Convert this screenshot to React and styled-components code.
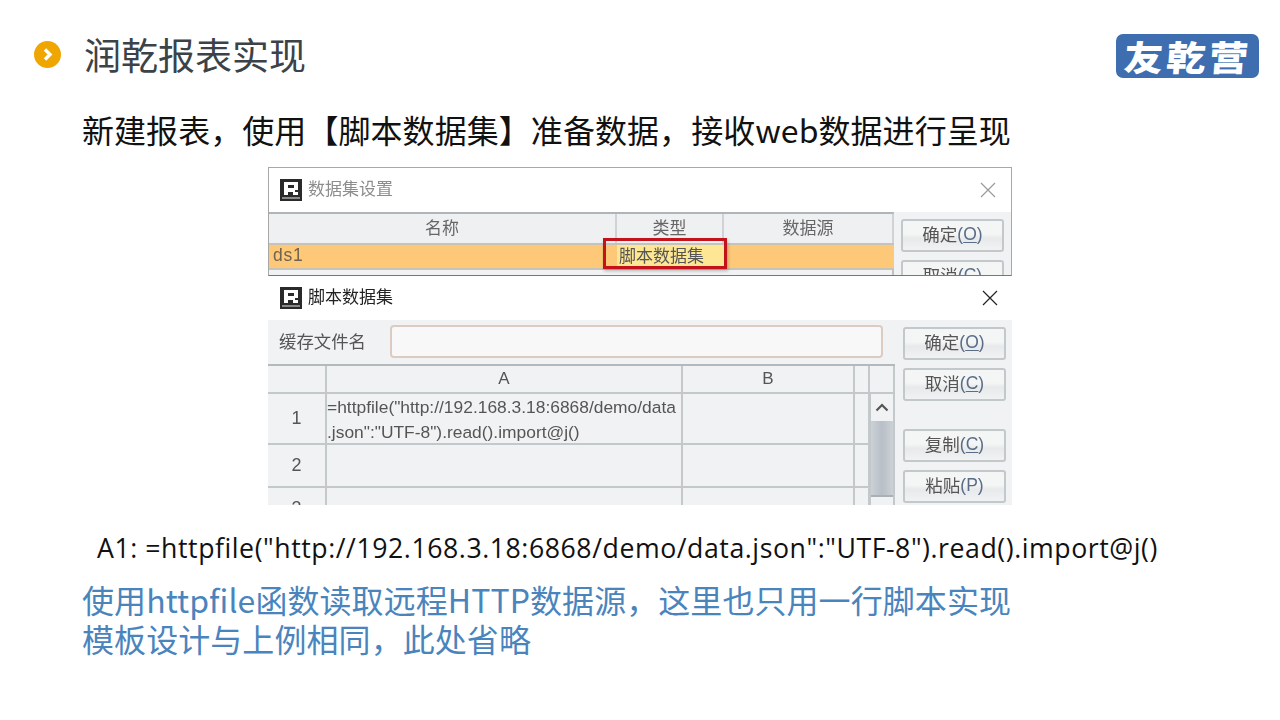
import React from "react";
import styled, { createGlobalStyle } from "styled-components";

const Global = createGlobalStyle`
  html, body { margin: 0; padding: 0; background: #fff; }
  * { box-sizing: border-box; }
`;
const CJK = `"Open Sans", "Noto Sans CJK SC", sans-serif`;
const UI = `"Liberation Sans", "Noto Sans CJK SC", sans-serif`;

const Slide = styled.div`
  width: 1280px; height: 720px; overflow: hidden; background: #fff;
  display: flex; flex-direction: column; font-family: ${CJK};
`;
const Header = styled.header`
  height: 78px; padding: 34px 21px 0 34px;
  display: flex; align-items: flex-start; justify-content: space-between;
`;
const TitleWrap = styled.div`display: flex; align-items: center; gap: 23px; height: 40px;`;
const Title = styled.h1`
  margin: 0; font-size: 37px; font-weight: 400; line-height: 40px; color: #3b4349;
  font-family: "Noto Sans CJK SC", sans-serif;
`;
const Logo = styled.div`
  width: 143px; height: 44px; border-radius: 7px; background: #3e6db0; color: #fff;
  display: flex; align-items: center; justify-content: center; padding-left: 2px;
`;
const LogoText = styled.span`
  display: block; transform: scaleX(1.12) skewX(-4deg); letter-spacing: 3px; white-space: nowrap;
  font: 900 35px/44px "Noto Sans CJK SC", sans-serif;
`;
const Subtitle = styled.p`
  margin: 29px 0 0 82px; font: 400 32px/44px "Noto Sans CJK SC", sans-serif; color: #111; height: 44px;
  letter-spacing: 0.06px;
`;
const Shots = styled.div`
  margin: 16px 0 0 268px; width: 744px; height: 338px; display: flex; flex-direction: column;
  filter: blur(0.4px); font-family: ${UI};
`;
const Dialog = styled.section`
  height: ${p => p.$h}px; overflow: hidden; position: relative;
  background: #f1f2f3; display: flex; flex-direction: column; flex: none;
  ${p => p.$framed && "border: 1px solid #a8a8a8; border-bottom: 1px solid #777;"}
`;
const TitleBar = styled.div`
  height: ${p => p.$h}px; flex: none; background: #fff; display: flex; align-items: center;
  padding: 0 ${p => p.$pr}px 0 ${p => p.$pl}px; gap: 6px;
  color: ${p => p.$dim ? "#8d8d8d" : "#222"};
`;
const DialogName = styled.span`
  flex: 1; font: 400 17px/22px "Noto Sans CJK SC", sans-serif; padding-bottom: 4px;
`;
const Body = styled.div`flex: 1; display: flex; min-height: 0;`;
const Left = styled.div`flex: none; width: ${p => p.$w}px; display: flex; flex-direction: column;`;
const Side = styled.div`
  flex: 1; display: flex; flex-direction: column; align-items: ${p => p.$align || "center"};
  padding-top: ${p => p.$top}px;
`;
const Btn = styled.div`
  width: 103px; height: 33px; flex: none; margin-bottom: ${p => p.$mb}px;
  border: 2px solid #c3c8cb; border-radius: 3px; padding-bottom: 4px;
  background: linear-gradient(#f4f5f5 45%, #e7e9ea 60%, #f1f2f3);
  display: flex; align-items: center; justify-content: center;
  font-size: 17.5px; line-height: 24px; color: #555; font-family: "Noto Sans CJK SC", sans-serif;
`;
const Key = styled.span`color: #5a6d88; font-family: "Liberation Sans", sans-serif; font-size: 17.5px;`;
const Mn = styled.u`text-underline-offset: 2px;`;

const Sets = styled.div`
  display: grid; grid-template-columns: 348px 107px 170px; grid-template-rows: 29px 27px 20px;
  border-top: 2px solid #b0b5b8; border-right: 2px solid #bcc1c4;
`;
const SetHead = styled.div`
  display: flex; align-items: center; justify-content: center; background: #eff0f2; padding-bottom: 4px;
  border-right: 2px solid #d0d3d6; font: 400 17px/22px "Noto Sans CJK SC", sans-serif; color: #666;
`;
const SetCell = styled.div`
  background: #fdc877; border-top: 2px solid #c8c3b8; border-bottom: 2px solid #c8c3b8;
  padding-left: 4px; font-size: 17.5px; line-height: 21px; color: #6e6350; letter-spacing: .8px;
`;
const SetHit = styled(SetCell)`
  background: #fde794; color: #555; font: 400 17px/20px "Noto Sans CJK SC", sans-serif; letter-spacing: 0; padding-left: 2px;
`;
const Mark = styled.div`
  position: absolute; left: 334px; top: 70px; width: 124px; height: 31px;
  border: 3px solid #c3131a; box-shadow: 1px 2px 3px rgba(0,0,0,.25);
`;
const CacheRow = styled.div`
  height: 44px; flex: none; display: flex; align-items: flex-start; padding: 5px 0 0 11px;
`;
const CacheLabel = styled.span`
  width: 111px; font: 400 17.4px/31px "Noto Sans CJK SC", sans-serif; color: #555;
`;
const CacheInput = styled.div`
  width: 493px; height: 33px; background: #f8f8f8; border: 2px solid #dccbc0; border-radius: 4px;
`;
const Sheet = styled.div`
  width: 627px; display: grid; grid-template-columns: 59px 356px 172px 15px 25px;
  grid-template-rows: 28px 51px 43px 43px; position: relative;
  border-top: 2px solid #b4b9bc;
`;
const C = styled.div`
  border-right: 2px solid #c3c8cb; border-bottom: 2px solid #c3c8cb;
  display: flex; align-items: center; justify-content: center; color: #555;
  font-size: ${p => p.$fs || 17}px; background: #f1f2f3;
`;
const Formula = styled(C)`
  display: block; padding: 1px 0 0 0; font-size: 17.4px; line-height: 25px; color: #555; white-space: nowrap;
`;
const Bar = styled.div`
  position: absolute; left: 601px; top: 28px; width: 26px; height: 130px; border-left: 2px solid #c3c8cb; border-right: 2px solid #c3c8cb;
  display: flex; flex-direction: column; background: #f1f2f3;
`;
const BarBtn = styled.div`height: 27px; display: flex; align-items: center; justify-content: center; flex: none;`;
const Thumb = styled.div`height: 76px; flex: none; background: linear-gradient(90deg, #ccd1d8, #b9bfc6 50%, #ccd1d8); border-bottom: 2px solid #aab0b6;`;

const Script = styled.p`
  margin: 21px 0 0 97px; font-size: 26.7px; line-height: 44px; height: 44px; color: #111; white-space: nowrap;
  letter-spacing: 0.55px;
`;
const Note = styled.p`
  margin: 10px 0 0 82px; font: 400 32px/39px "Noto Sans CJK SC", sans-serif; color: #4a84bd; letter-spacing: 0.07px;
`;

const Bullet = () => (
  <svg width="27" height="27" viewBox="0 0 27 27">
    <circle cx="13.5" cy="13.5" r="13.5" fill="#efa600" />
    <path d="M11 8.5 L16 13.5 L11 18.5" fill="none" stroke="#fff" strokeWidth="3.4" />
  </svg>
);
const AppIcon = () => (
  <svg width="22" height="22" viewBox="0 0 22 22">
    <rect width="22" height="22" fill="#2a2a2a" />
    <path fillRule="evenodd" d="M4 3h14v8h-3v2h3v3h-5v-3H8v3H4zM8 6v3h6V6z" fill="#fff" />
    <rect x="2" y="18" width="18" height="2" fill="#8a8a8a" />
  </svg>
);
const Close = ({ c }) => (
  <svg width="16" height="16" viewBox="0 0 16 16">
    <path d="M1 1 L15 15 M15 1 L1 15" stroke={c} strokeWidth="1.2" fill="none" />
  </svg>
);

export default function App() {
  return (
    <Slide>
      <Global />
      <Header>
        <TitleWrap>
          <Bullet />
          <Title>润乾报表实现</Title>
        </TitleWrap>
        <Logo><LogoText>友乾营</LogoText></Logo>
      </Header>
      <Subtitle>新建报表，使用【脚本数据集】准备数据，接收web数据进行呈现</Subtitle>
      <Shots>
        <Dialog $h={109} $framed>
          <TitleBar $h={44} $pl={11} $pr={15} $dim>
            <AppIcon />
            <DialogName>数据集设置</DialogName>
            <Close c="#9a9a9a" />
          </TitleBar>
          <Body>
            <Left $w={625}>
              <Sets>
                <SetHead>名称</SetHead>
                <SetHead>类型</SetHead>
                <SetHead>数据源</SetHead>
                <SetCell>ds1</SetCell>
                <SetHit>脚本数据集</SetHit>
                <SetCell />
              </Sets>
            </Left>
            <Side $top={7}>
              <Btn $mb={8}>确定<Key>(<Mn>O</Mn>)</Key></Btn>
              <Btn $mb={0}>取消<Key>(<Mn>C</Mn>)</Key></Btn>
            </Side>
          </Body>
          <Mark />
        </Dialog>
        <Dialog $h={229}>
          <TitleBar $h={44} $pl={12} $pr={14}>
            <AppIcon />
            <DialogName>脚本数据集</DialogName>
            <Close c="#222" />
          </TitleBar>
          <Body>
            <Left $w={635}>
              <CacheRow>
                <CacheLabel>缓存文件名</CacheLabel>
                <CacheInput />
              </CacheRow>
              <Sheet>
                <C />
                <C>A</C>
                <C>B</C>
                <C />
                <C />
                <C $fs={18}>1</C>
                <Formula>=httpfile("http://192.168.3.18:6868/demo/data<br />.json":"UTF-8").read().import@j()</Formula>
                <C />
                <C />
                <C />
                <C $fs={18}>2</C>
                <C />
                <C />
                <C />
                <C />
                <C $fs={18}>3</C>
                <C />
                <C />
                <C />
                <C />
                <Bar>
                  <BarBtn>
                    <svg width="14" height="9" viewBox="0 0 14 9"><path d="M1.5 7.5 L7 2 L12.5 7.5" fill="none" stroke="#555" strokeWidth="2.2" /></svg>
                  </BarBtn>
                  <Thumb />
                </Bar>
              </Sheet>
            </Left>
            <Side $top={7} $align="flex-start">
              <Btn $mb={8}>确定<Key>(<Mn>O</Mn>)</Key></Btn>
              <Btn $mb={28}>取消<Key>(<Mn>C</Mn>)</Key></Btn>
              <Btn $mb={8}>复制<Key>(<Mn>C</Mn>)</Key></Btn>
              <Btn $mb={0}>粘贴<Key>(P)</Key></Btn>
            </Side>
          </Body>
        </Dialog>
      </Shots>
      <Script>A1: =httpfile("http://192.168.3.18:6868/demo/data.json":"UTF-8").read().import@j()</Script>
      <Note>使用httpfile函数读取远程HTTP数据源，这里也只用一行脚本实现<br />模板设计与上例相同，此处省略</Note>
    </Slide>
  );
}
